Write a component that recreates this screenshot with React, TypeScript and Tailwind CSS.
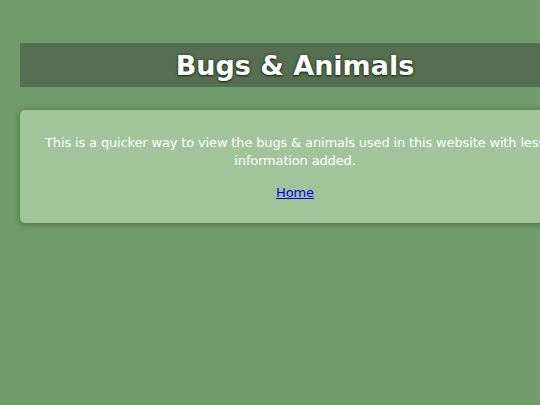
export default function App() {
  return (
    <div className="min-h-[405px] w-[590px] bg-[#709b6a] px-5 pt-[43px] pb-10 font-['Comic_Sans_MS','DejaVu_Sans',sans-serif] text-white">
      <header className="flex h-[44px] items-center justify-center bg-[#566f51]">
        <h1 className="text-[27px] font-bold leading-none [text-shadow:0_0_3px_#1f2d1c,0_1px_2px_#1f2d1c]">
          Bugs &amp; Animals
        </h1>
      </header>

      <section className="mt-[23px] rounded-[5px] bg-[#a2c49b] px-3 pt-[24px] pb-[21px] text-center text-[13px] leading-[18px] tracking-[-0.15px] shadow-[0_1px_6px_rgba(40,60,35,0.55)]">
        <p>
          This is a quicker way to view the bugs &amp; animals used in this website with less information added.
        </p>
        <p className="mt-[14px]">
          <a href="#" className="text-[#0000ee] underline">
            Home
          </a>
        </p>
      </section>
    </div>
  );
}
